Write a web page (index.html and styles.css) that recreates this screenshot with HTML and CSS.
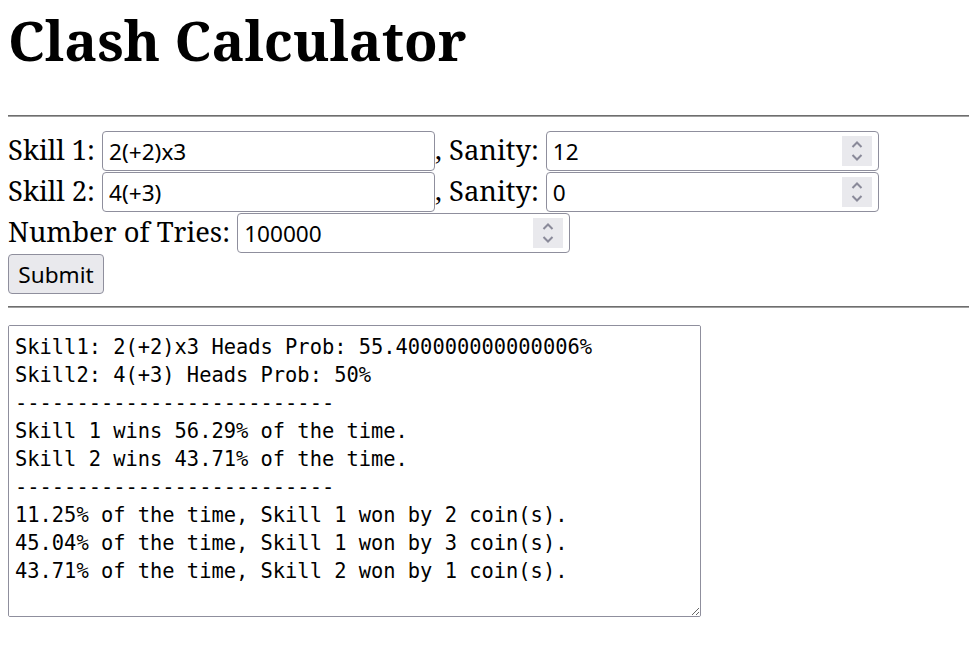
FILE: index.html
```html
<!DOCTYPE html>
<html>
<head>
<meta charset="utf-8">
<title>Clash Calculator</title>
<link rel="stylesheet" href="styles.css">
</head>
<body>
<h1 class="title">Clash Calculator</h1>
<hr class="rule">
<form class="calc">
  <div class="row">Skill 1: <input class="field" type="text" value="2(+2)x3">, Sanity: <span class="num"><input class="num-input" type="text" value="12"><span class="spin"><svg width="30" height="30" viewBox="0 0 30 30"><path d="M10.5 11 L15 6.5 L19.5 11" fill="none" stroke="#8a8a99" stroke-width="2"/><path d="M10.5 19 L15 23.5 L19.5 19" fill="none" stroke="#8a8a99" stroke-width="2"/></svg></span></span></div>
  <div class="row">Skill 2: <input class="field" type="text" value="4(+3)">, Sanity: <span class="num"><input class="num-input" type="text" value="0"><span class="spin"><svg width="30" height="30" viewBox="0 0 30 30"><path d="M10.5 11 L15 6.5 L19.5 11" fill="none" stroke="#8a8a99" stroke-width="2"/><path d="M10.5 19 L15 23.5 L19.5 19" fill="none" stroke="#8a8a99" stroke-width="2"/></svg></span></span></div>
  <div class="row">Number of Tries: <span class="num"><input class="num-input" type="text" value="100000"><span class="spin"><svg width="30" height="30" viewBox="0 0 30 30"><path d="M10.5 11 L15 6.5 L19.5 11" fill="none" stroke="#8a8a99" stroke-width="2"/><path d="M10.5 19 L15 23.5 L19.5 19" fill="none" stroke="#8a8a99" stroke-width="2"/></svg></span></span></div>
  <div class="row"><button class="submit" type="button">Submit</button></div>
</form>
<hr class="rule rule-2">
<textarea class="output">Skill1: 2(+2)x3 Heads Prob: 55.400000000000006%
Skill2: 4(+3) Heads Prob: 50%
--------------------------
Skill 1 wins 56.29% of the time.
Skill 2 wins 43.71% of the time.
--------------------------
11.25% of the time, Skill 1 won by 2 coin(s).
45.04% of the time, Skill 1 won by 3 coin(s).
43.71% of the time, Skill 2 won by 1 coin(s).
</textarea>
</body>
</html>
```
FILE: styles.css
```css
html, body {
  background: #fff;
}
body {
  margin: 8px 0 8px 8px;
  font-family: "Noto Serif", "DejaVu Serif", serif;
  font-size: 27.4px;
  color: #000;
}
.title {
  font-size: 55px;
  font-weight: bold;
  margin: 0;
  line-height: 64px;
}
.rule {
  border: none;
  border-top: 1px solid #6e6e6e;
  border-bottom: 1px solid #a0a0a0;
  height: 0;
  margin: 43px 0 14px 0;
}
.rule-2 {
  margin: 11px 0 17px 0;
}
.calc {
  margin: 0;
}
.row {
  height: 41px;
  line-height: 37px;
  white-space: nowrap;
}
.field,
.num {
  box-sizing: border-box;
  width: 333px;
  height: 40px;
  border: 1px solid #8f8f9d;
  border-radius: 4px;
  background: #fff;
  vertical-align: top;
}
.field {
  font-family: "Noto Sans", sans-serif;
  font-size: 22.6px;
  padding: 0 6px;
  color: #000;
  outline: none;
}
.num {
  display: inline-flex;
  align-items: center;
  padding: 0 6px 0 0;
}
.num-input {
  flex: 1;
  min-width: 0;
  border: none;
  outline: none;
  background: transparent;
  font-family: "Noto Sans", sans-serif;
  font-size: 22.6px;
  padding: 0 0 0 6px;
  height: 100%;
  color: #000;
}
.spin {
  display: block;
  flex: 0 0 30px;
  width: 30px;
  height: 30px;
  background: #e9e9ed;
}
.spin svg {
  display: block;
}
.submit {
  box-sizing: border-box;
  width: 96px;
  height: 40px;
  border: 1px solid #8f8f9d;
  border-radius: 4px;
  background: #e9e9ed;
  font-family: "Noto Sans", sans-serif;
  font-size: 22.6px;
  color: #000;
  padding: 0;
  vertical-align: top;
}
.output {
  display: block;
  box-sizing: border-box;
  width: 693px;
  height: 292px;
  border: 1px solid #8f8f9d;
  border-radius: 2px;
  padding: 7px 6px 5px 6px;
  font-family: "DejaVu Sans Mono", monospace;
  font-size: 20.4px;
  line-height: 28px;
  color: #000;
  resize: both;
  margin: 0;
}
```
